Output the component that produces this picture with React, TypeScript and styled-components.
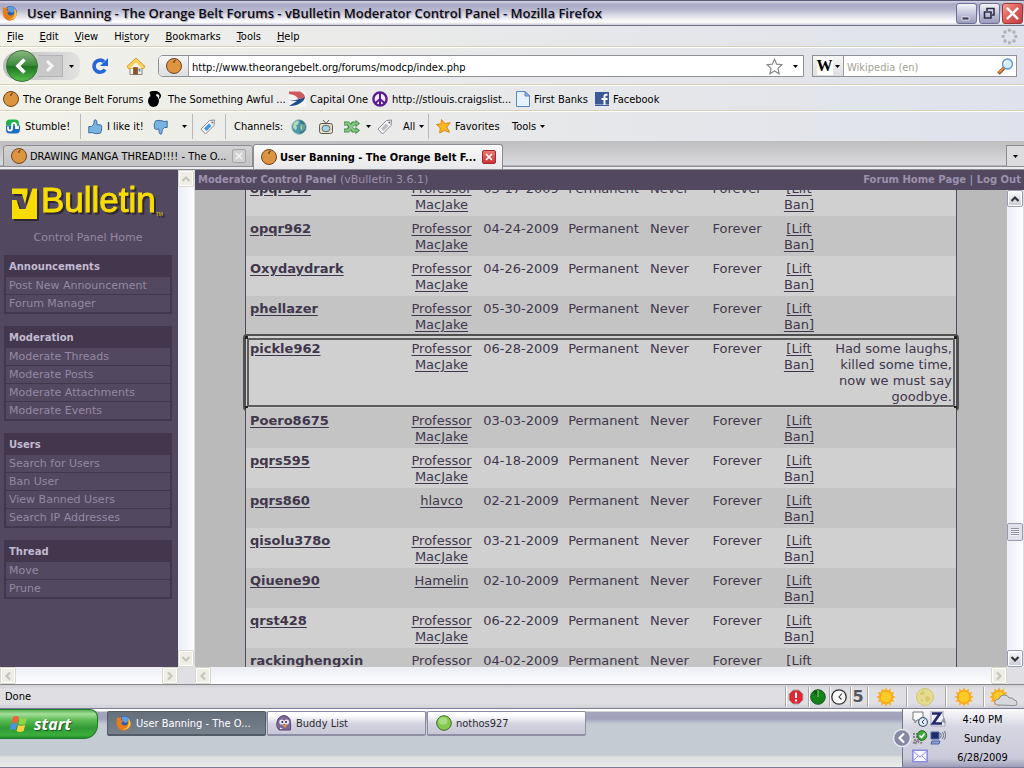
import React from "react";
import styled, { createGlobalStyle, css } from "styled-components";

const ui = '"DejaVu Sans Condensed", "DejaVu Sans", Tahoma, sans-serif';
const verdana = 'Verdana, "DejaVu Sans", sans-serif';
const toolbarBg = "linear-gradient(90deg, #f2f2ea 0%, #ecece9 25%, #e6e7ea 60%, #dfe2ec 100%)";

const GlobalStyle = createGlobalStyle`
  * { box-sizing: border-box; }
  body { margin: 0; overflow: hidden; background: #dfe2ec; font-family: ${ui}; font-size: 11px; color: #000; }
  button, input { font: inherit; color: inherit; margin: 0; padding: 0; border: 0; background: none; outline: 0; }
  button { white-space: nowrap; }
  a { color: inherit; text-decoration: none; }
  svg { display: block; flex: none; }
`;

const Screen = styled.div`
  display: flex;
  flex-direction: column;
  height: 100vh;
`;

/* ---------- title bar ---------- */
const TitleBar = styled.header`
  display: flex;
  align-items: center;
  flex: none;
  height: 26px;
  padding: 0 1px 0 2px;
  gap: 9px;
  border-top: 1px solid #5b5a78;
  border-bottom: 1px solid #73738c;
  background: linear-gradient(#d8d8e6 0%, #a9a9c6 14%, #b5b5cd 35%, #dcdce8 60%, #ffffff 88%, #c9c9d6 100%);
`;
const Title = styled.h1`
  flex: 1;
  margin: 0;
  font: 600 13px/24px "Open Sans", sans-serif;
  color: #0c0c14;
  text-shadow: 1px 1px 1px #9c9cb4;
  white-space: nowrap;
`;
const WindowButtons = styled.div`
  display: flex;
  gap: 2px;
`;
const WindowButton = styled.button<{ $close?: boolean }>`
  display: flex;
  align-items: center;
  justify-content: center;
  width: 21px;
  height: 21px;
  border: 1px solid ${(p) => (p.$close ? "#a03438" : "#6d6f98")};
  border-radius: 3px;
  background: ${(p) =>
    p.$close
      ? "linear-gradient(135deg, #f0a090, #dc5a58 50%, #c04048)"
      : "linear-gradient(#f4f4fa, #c4c4dc 50%, #9a9abc)"};
`;

/* ---------- toolbars ---------- */
const Bar = styled.div<{ $h: number; $pad?: string; $last?: boolean }>`
  display: flex;
  align-items: center;
  flex: none;
  height: ${(p) => p.$h}px;
  padding: ${(p) => p.$pad || "0"};
  background: ${toolbarBg};
  ${(p) =>
    !p.$last &&
    css`
      border-bottom: 1px solid #fff;
      box-shadow: inset 0 -1px 0 #d6d0b4;
    `}
`;
const MenuItem = styled.button`
  margin-right: 16px;
  line-height: 20px;
`;
const Spacer = styled.div`
  flex: 1;
`;
const ToolItem = styled.button<{ $w?: number; $gap?: number; $indent?: boolean }>`
  display: flex;
  align-items: center;
  gap: ${(p) => p.$gap ?? 4}px;
  flex: none;
  width: ${(p) => (p.$w ? p.$w + "px" : "auto")};
  height: 24px;
  padding-left: ${(p) => (p.$indent ? "7px" : "0")};
  text-align: left;
`;
const Bookmark = styled.a<{ $w: number }>`
  display: flex;
  align-items: center;
  gap: 4px;
  flex: none;
  width: ${(p) => p.$w}px;
  height: 24px;
  white-space: nowrap;
`;
const Separator = styled.span`
  flex: none;
  width: 1px;
  height: 25px;
  background: #b6b7bf;
`;
const Label = styled.span`
  flex: none;
  width: 65px;
  padding-left: 8px;
`;

const HistoryPill = styled.div`
  display: flex;
  align-items: center;
  flex: none;
  width: 77px;
  height: 28px;
  margin-right: 11px;
  padding-left: 3px;
  border-radius: 14px 10px 10px 14px;
  background: linear-gradient(90deg, #bdbdbd, #d6d6d6 70%, #e2e2e0);
`;
const BackButton = styled.button`
  flex: none;
`;
const ForwardButton = styled.button`
  display: flex;
  align-items: center;
  justify-content: center;
  width: 25px;
  height: 22px;
  border: 1px solid #b4b4b4;
  border-left: 0;
  background: #c8c8c8;
`;
const HistoryMenu = styled.button`
  display: flex;
  padding-left: 6px;
`;
const Field = styled.div<{ $w?: number }>`
  display: flex;
  align-items: center;
  flex: ${(p) => (p.$w ? "none" : 1)};
  width: ${(p) => (p.$w ? p.$w + "px" : "auto")};
  height: 22px;
  margin-right: ${(p) => (p.$w ? "0" : "8px")};
  border: 1px solid #8e9096;
  border-radius: ${(p) => (p.$w ? "0" : "5px 0 0 5px")};
  background: #fff;
  overflow: hidden;
`;
const FieldIcon = styled.button<{ $w: number }>`
  display: flex;
  align-items: center;
  justify-content: center;
  gap: 2px;
  flex: none;
  width: ${(p) => p.$w}px;
  height: 20px;
  border-right: 1px solid #9a9ca2;
  background: linear-gradient(#f6f6f6, #dedee0);
`;
const TextInput = styled.input`
  flex: 1;
  min-width: 0;
  height: 20px;
  padding: 2px 0 0 3px;
  &::placeholder { color: #a4a294; opacity: 1; }
`;
const Wiki = styled.b`
  font: bold 16px/18px "Liberation Serif", serif;
  background: #fff;
`;

/* ---------- tabs ---------- */
const TabStrip = styled.div`
  display: flex;
  align-items: flex-end;
  flex: none;
  height: 29px;
  padding-left: 3px;
  border-bottom: 1px solid #8c8d92;
  background: linear-gradient(#bebec0, #dadade 24px, #8c8d92 25px, #8c8d92 26px, #ececee 26px);
`;
const Tab = styled.div<{ $active?: boolean }>`
  display: flex;
  align-items: center;
  flex: none;
  width: 250px;
  height: ${(p) => (p.$active ? "25px" : "22px")};
  margin-bottom: ${(p) => (p.$active ? "0" : "2px")};
  padding: 0 6px 0 7px;
  gap: 3px;
  border: 1px solid #8c8d92;
  border-bottom: ${(p) => (p.$active ? "0" : "1px solid #8c8d92")};
  border-radius: 3px 3px 0 0;
  font-weight: ${(p) => (p.$active ? "bold" : "normal")};
  background: ${(p) => (p.$active ? "linear-gradient(#fafafa, #e8e8ea)" : "linear-gradient(#d2d2d2, #c2c2c4)")};
`;
const TabTitle = styled.button`
  flex: 1;
  min-width: 0;
  text-align: left;
`;
const TabClose = styled.button<{ $active?: boolean }>`
  display: flex;
  align-items: center;
  justify-content: center;
  flex: none;
  width: 14px;
  height: 14px;
  border: 1px solid ${(p) => (p.$active ? "#a82830" : "#a4a4a6")};
  border-radius: 2px;
  background: ${(p) => (p.$active ? "linear-gradient(#e87870, #cc3038)" : "#d0d0d0")};
`;
const AllTabs = styled.button`
  display: flex;
  align-items: center;
  justify-content: center;
  width: 18px;
  height: 22px;
  margin-bottom: 2px;
  border: 1px solid #8c8d92;
  border-right: 0;
  background: #dcdcde;
`;

/* ---------- frames ---------- */
const Frames = styled.main`
  display: flex;
  flex: 1;
  min-height: 0;
  border-bottom: 1px solid #85868c;
  font-family: ${verdana};
`;
const Frame = styled.section<{ $w?: number }>`
  display: flex;
  flex-direction: column;
  flex: ${(p) => (p.$w ? "none" : 1)};
  width: ${(p) => (p.$w ? p.$w + "px" : "auto")};
  min-width: 0;
`;
const FrameBody = styled.div`
  display: flex;
  flex: 1;
  min-height: 0;
`;
const Sidebar = styled.nav`
  flex: 1;
  min-width: 0;
  padding: 5px 6px 0 4px;
  overflow: hidden;
  background: #52485f;
  color: #9488a4;
  font-size: 11px;
`;
const Logo = styled.div`
  display: flex;
  align-items: flex-end;
  height: 46px;
  padding-left: 7px;
  color: #f7dc00;
  filter: drop-shadow(2px 2px 0 #2e2738);
`;
const LogoText = styled.span`
  margin-left: 2px;
  font: 35px/42px "Liberation Sans", sans-serif;
  -webkit-text-stroke: 1px #f7dc00;
`;
const Trade = styled.span`
  font: bold 5px/14px "Liberation Sans", sans-serif;
  color: #b8a420;
`;
const HomeLink = styled.a`
  display: block;
  margin: 9px 0 10px;
  text-align: center;
  line-height: 15px;
`;
const Group = styled.section`
  margin-bottom: 12px;
  padding: 0 2px 1px;
  background: #42374d;
`;
const GroupTitle = styled.h2`
  margin: 0;
  padding: 1px 0 0 3px;
  font: bold 10px/21px ${verdana};
  color: #c2bad0;
`;
const GroupLink = styled.a`
  display: block;
  height: 18px;
  padding-left: 3px;
  border-bottom: 1px solid #42374d;
  background: #52485f;
  line-height: 17px;
`;
const PanelHead = styled.div`
  display: flex;
  justify-content: space-between;
  flex: none;
  height: 20px;
  padding: 0 3px;
  background: #52485f;
  color: #9d92ad;
  font-size: 11px;
  line-height: 20px;
  b { font-size: 10px; }
`;
const Viewport = styled.div`
  flex: 1;
  min-width: 0;
  overflow: hidden;
  padding: 0 50px;
  background: #bababa;
`;
const BanTable = styled.table`
  width: 100%;
  margin-top: -14px;
  border: solid #52485f;
  border-width: 0 1px;
  border-spacing: 0;
  table-layout: fixed;
  font-size: 13px;
  line-height: 16px;
  color: #40374d;
  a { text-decoration: underline; text-underline-offset: 2px; }
`;
const Col = styled.col<{ $w: string }>`
  width: ${(p) => p.$w};
`;
const Row = styled.tr<{ $dark: boolean }>`
  position: relative;
  background: ${(p) => (p.$dark ? "#c4c4c4" : "#d0d0d0")};
`;
const Cell = styled.td<{ $align?: string }>`
  padding: 5px 4px 3px;
  vertical-align: top;
  text-align: ${(p) => p.$align || "center"};
`;
const Marker = styled.div`
  position: absolute;
  inset: -2px -3px -3px -3px;
  border: 2px solid #505050;
  border-radius: 4px;
  pointer-events: none;
  &::before {
    content: "";
    position: absolute;
    inset: 2px;
    border: 2px solid #5c5c5c;
    border-radius: 2px;
  }
  &::after {
    content: "";
    position: absolute;
    inset: 0;
    background:
      linear-gradient(#222 0 0) 0 0 / 3px 3px,
      linear-gradient(#222 0 0) 100% 0 / 3px 3px,
      linear-gradient(#222 0 0) 0 100% / 3px 3px,
      linear-gradient(#222 0 0) 100% 100% / 3px 3px;
    background-repeat: no-repeat;
  }
`;

/* ---------- scroll bars ---------- */
const Track = styled.div<{ $horizontal?: boolean }>`
  display: flex;
  justify-content: space-between;
  flex: none;
  flex-direction: ${(p) => (p.$horizontal ? "row" : "column")};
  ${(p) =>
    p.$horizontal
      ? "height: 17px; background: linear-gradient(#eceef4, #fdfdff);"
      : "width: 17px; background: linear-gradient(90deg, #eceef6, #fdfdff); border-right: 1px solid #dcdce4;"}
`;
const ScrollButton = styled.button<{ $on?: boolean }>`
  display: flex;
  align-items: center;
  justify-content: center;
  flex: none;
  width: 16px;
  height: 17px;
  border: 1px solid ${(p) => (p.$on ? "#9a9cb4" : "#d8d8c8")};
  border-radius: 2px;
  background: ${(p) => (p.$on ? "linear-gradient(#fbfbfd, #c8cad8)" : "#eeeee6")};
  box-shadow: inset 0 0 0 1px #fff;
`;
const Corner = styled.div`
  flex: none;
  width: 17px;
  background: #e0dfe3;
`;
const ScrollRow = styled.div`
  display: flex;
  flex: none;
  > :first-child { flex: 1; }
`;
const ThumbSpace = styled.div`
  display: flex;
  flex-direction: column;
  flex: 1;
  &::before { content: ""; flex: 316; }
  &::after { content: ""; flex: 109; }
`;
const ScrollThumb = styled.button`
  width: 16px;
  height: 18px;
  flex: none;
  border: 1px solid #9a9cb4;
  border-radius: 2px;
  background: repeating-linear-gradient(#8c8ea4 0 1px, #f4f4f8 1px 2px) center / 8px 8px no-repeat, #e0e1ea;
`;

/* ---------- status bar ---------- */
const Status = styled.footer`
  display: flex;
  align-items: center;
  flex: none;
  height: 23px;
  padding-left: 5px;
  background: linear-gradient(#d0d0d4, #dfdfe4 4px, #dfdfe4 18px, #cfcfd6);
`;
const StatusCell = styled.div<{ $w: number }>`
  display: flex;
  align-items: center;
  justify-content: center;
  flex: none;
  width: ${(p) => p.$w}px;
  height: 20px;
  padding-right: 2px;
  border-left: 1px solid #a9a8a4;
  box-shadow: inset 1px 0 0 #fff;
`;
const PageRank = styled.b`
  font: bold 16px/20px "DejaVu Sans", sans-serif;
  color: #55565c;
`;

/* ---------- task bar ---------- */
const TaskBar = styled.footer`
  display: flex;
  flex: none;
  height: 60px;
  border-top: 1px solid #7c7c98;
  border-bottom: 1px solid #7c7c98;
  background: linear-gradient(#fff 0 2px, #a4a4bc 3px, #a2a2bc 10px, #c5cbd3 15px, #c5cbd3 46px, #dcdfe0 48px, #eaebea 58px);
`;
const Start = styled.button`
  display: flex;
  align-items: center;
  gap: 6px;
  flex: none;
  width: 98px;
  height: 30px;
  margin-right: 9px;
  padding-left: 10px;
  border-radius: 0 8px 14px 0;
  border: solid #1d7a24;
  border-width: 1px 1px 1px 0;
  background: linear-gradient(#5fae58, #a4e09a 4px, #5cbc54 10px, #309a34 18px, #3cae3c 25px, #248a2c);
  color: #fff;
  font: italic bold 16px/26px "Open Sans", sans-serif;
  text-shadow: 1px 1px 1px #1c5420;
`;
const Task = styled.button<{ $active?: boolean }>`
  display: flex;
  align-items: center;
  gap: 4px;
  flex: none;
  width: 159px;
  height: 25px;
  margin: 2px 1px 0 0;
  padding-left: 8px;
  text-align: left;
  border: 1px solid ${(p) => (p.$active ? "#525c68" : "#8e8ea4")};
  border-bottom-width: 2px;
  border-radius: 2px;
  color: ${(p) => (p.$active ? "#fff" : "#2c2c30")};
  background: ${(p) =>
    p.$active ? "linear-gradient(#666f7c, #76818c)" : "linear-gradient(#ffffff 15%, #d2d2e0 55%, #c8c8d8)"};
`;
const Tray = styled.div`
  position: relative;
  display: flex;
  align-items: center;
  flex: none;
  width: 122px;
  padding: 0 5px 0 9px;
  border-left: 1px solid #73738c;
  background: linear-gradient(#fbfbfd, #d6d6e2 18px, #c9c9d9 50px, #9c9cb8);
`;
const TrayIcons = styled.div`
  display: grid;
  grid-template-columns: 16px 16px;
  grid-auto-rows: 16px;
  gap: 3px 2px;
`;
const Clock = styled.time`
  flex: 1;
  text-align: center;
  line-height: 19px;
`;
const TrayToggle = styled.button`
  position: absolute;
  left: -11px;
  top: 19px;
`;

/* ---------- icons ---------- */
const Arrow = () => (
  <svg width="5" height="3" viewBox="0 0 5 3"><path d="M0 0h5L2.500 3z" fill="#000" /></svg>
);
const Orange = () => (
  <svg width="16" height="16" viewBox="0 0 16 16">
    <circle cx="8" cy="8" r="7.500" fill="#dd9440" stroke="#6c4520" />
    <path d="M8 4.500V3l2-1M7 4h2" fill="none" stroke="#6c4520" />
  </svg>
);
const Firefox = () => (
  <svg width="16" height="16" viewBox="0 0 16 16">
    <circle cx="8.500" cy="7.500" r="6.500" fill="#2a5caa" />
    <path d="M6 2c3-1.500 7 0 8 3l-4 3-4-2z" fill="#5f9cdc" />
    <path d="M1 1.500c.5 1 1 1.500 2 1.500 1.200-.6 2.500-.4 3 0L4.800 5 7 6.400 5.500 7.600c0 2.800 3 3.600 5 2.500 1.600-1 2-3 1.200-6 3 2 3.600 5 2 8C12 15.500 8 16.400 5 15 1 13 .3 9 .7 6 .9 4 .8 3 1 1.500z" fill="#e67c1c" />
    <path d="M12.500 4c2.500 2 3 5.500 1 8-2 2.300-5 3-7 2 4 .2 7-2.500 6-10z" fill="#f8c83c" />
  </svg>
);
const Back = () => (
  <svg width="32" height="32" viewBox="0 0 32 32">
    <defs>
      <linearGradient id="bk" x1="0" y1="0" x2="0" y2="1">
        <stop offset="0" stopColor="#8cb884" /><stop offset=".48" stopColor="#3b8a3a" />
        <stop offset=".52" stopColor="#1d7420" /><stop offset="1" stopColor="#58c04c" />
      </linearGradient>
    </defs>
    <circle cx="16" cy="16" r="15.500" fill="url(#bk)" stroke="#3c7440" />
    <path d="M18.500 9.500L12 16l6.500 6.500" fill="none" stroke="#fff" strokeWidth="3.600" />
  </svg>
);
const Forward = () => (
  <svg width="12" height="12" viewBox="0 0 12 12"><path d="M3 1l5 5-5 5" fill="none" stroke="#f6f6f6" strokeWidth="3" /></svg>
);
const Reload = () => (
  <svg width="18" height="18" viewBox="0 0 18 18">
    <path d="M14 12.500A6 6 0 1 1 13 4.700" fill="none" stroke="#2468d8" strokeWidth="3.600" />
    <path d="M17 1v8H9z" fill="#2468d8" />
  </svg>
);
const Home = () => (
  <svg width="20" height="18" viewBox="0 0 20 18">
    <path d="M4 9h12v8.500H4z" fill="#f6f2e8" stroke="#8c8478" />
    <path d="M10 1L1 9.500 2.500 11.500h15L19 9.500z" fill="#fbd05c" stroke="#d49a28" />
    <path d="M10 5.500l-6 6h12z" fill="#f6f2e8" />
    <path d="M7.500 10.500h4v6.500h-4z" fill="#8c5428" stroke="#6c4020" strokeWidth=".6" />
    <path d="M12.500 12h2v2.500h-2z" fill="#5c8cc4" />
  </svg>
);
const StarOutline = () => (
  <svg width="17" height="17" viewBox="0 0 17 17">
    <path d="M8.500 1.300l2.200 4.900 5.200.6-3.900 3.600 1.100 5.300-4.600-2.700-4.600 2.700 1.100-5.300L1.100 6.800l5.200-.6z" fill="#fff" stroke="#8a8a8a" strokeWidth="1.200" />
  </svg>
);
const Search = () => (
  <svg width="17" height="17" viewBox="0 0 17 17">
    <path d="M7 10l-5.500 5.500" stroke="#7a5030" strokeWidth="3.500" />
    <path d="M6.500 10L2 14.500" stroke="#ee9040" strokeWidth="2" />
    <circle cx="10.500" cy="6" r="5" fill="#d4ecfc" stroke="#5b92d4" strokeWidth="1.300" />
    <path d="M7.500 6a3 3 0 0 1 3-3" fill="none" stroke="#fff" strokeWidth="1.500" />
  </svg>
);
const Throbber = () => (
  <svg width="17" height="17" viewBox="0 0 17 17" fill="#b4b4b8">
    {[0, 45, 90, 135, 180, 225, 270, 315].map((a) => (
      <circle key={a} cx="8.500" cy="2.200" r="1.800" transform={`rotate(${a} 8.500 8.500)`} />
    ))}
  </svg>
);
const Grenade = () => (
  <svg width="17" height="16" viewBox="0 0 17 16">
    <ellipse cx="6.500" cy="10" rx="5.500" ry="6" fill="#000" />
    <path d="M2.500 1L5 0h5q3 1 4 4 .5 2-1.500 4l-.8-.8q1.300-2 .3-3.200Q11 3 9.500 3L9 5H3.500z" fill="#000" />
  </svg>
);
const CapitalOne = () => (
  <svg width="17" height="16" viewBox="0 0 17 16">
    <path d="M0 0h17v16H0z" fill="#f4f4f6" />
    <path d="M0 .5h11c4 2 5 4 5 6.500L9 8Q8 4 0 3z" fill="#cc5a5e" />
    <path d="M0 9.500Q9 9 16 6.500c-1 4.500-8 9-16 8.500l8-5z" fill="#1c4c88" />
  </svg>
);
const Peace = () => (
  <svg width="16" height="16" viewBox="0 0 16 16">
    <circle cx="8" cy="8" r="6.600" fill="#f4eef8" stroke="#5b1c94" strokeWidth="2.400" />
    <path d="M8 2v12M8 8l-4.500 4M8 8l4.500 4" stroke="#5b1c94" strokeWidth="2" fill="none" />
  </svg>
);
const PageIcon = () => (
  <svg width="14" height="16" viewBox="0 0 14 16">
    <path d="M.5.500h8.500L13.500 5v10.500H.5z" fill="#e6f2ff" stroke="#5a84c4" />
    <path d="M9 .5V5h4.500z" fill="#8cb4e8" stroke="#5a84c4" />
  </svg>
);
const Facebook = () => (
  <svg width="14" height="14" viewBox="0 0 14 14">
    <path d="M0 0h14v14H0z" fill="#3b5998" /><path d="M0 12h14v1H0z" fill="#8c9fc8" />
    <path d="M12.500 2.800H11Q9.500 2.800 9.500 4.500V13M6.500 7H12.500" fill="none" stroke="#fff" strokeWidth="2" />
  </svg>
);
const Stumble = () => (
  <svg width="16" height="16" viewBox="0 0 16 16">
    <path d="M1 4q0-3.500 4-3.500h5q4 0 4 4v2H1z" fill="#22b04c" />
    <path d="M1 6.500h14V10q0 4.500-4 4.500H5Q1 14.500 1 11z" fill="#1c6cc0" />
    <path d="M3 7.500v2q0 2 2 2t2-2V6q0-2 2-2t2 2v3h2V7" fill="none" stroke="#fff" strokeWidth="1.800" />
  </svg>
);
const Thumb = ({ down }: { down?: boolean }) => (
  <svg width="15" height="16" viewBox="0 0 15 16">
    <path
      d="M.8 7.500h2.700Q6 6 6 3.500 5.800.800 7 .8q2.300 0 2 5h3.500q1.500.4 1 2 .8 1.200 0 2.200.6 1.200-.4 2.200.2 1.800-1.400 2.200-4 .8-7-.6L3 13.500.8 14z"
      transform={down ? "translate(15 16) rotate(180)" : undefined}
      fill="#7ab2e0"
      stroke="#3a6ea4"
    />
  </svg>
);
const Tag = ({ gray }: { gray?: boolean }) => (
  <svg width="16" height="16" viewBox="0 0 16 16">
    <path d="M1 10L9.500 1.500 14.500 1l-.5 5.500L5.500 15z" fill="#f6f6f8" stroke="#8c8c90" />
    <path d="M4 9.500L9 4.500l2.500 2.500-5 5z" fill={gray ? "#bcbec4" : "#3c94ec"} />
    <circle cx="12.300" cy="3.500" r="1" fill="#6c6c70" />
  </svg>
);
const Globe = () => (
  <svg width="16" height="16" viewBox="0 0 16 16">
    <circle cx="8" cy="8" r="7.200" fill="#4896a8" stroke="#8cb4bc" />
    <path d="M3 3.500q3-2.500 5-1l-1 3-2 1 1 2-1 3-3-3zM10 5l4 .5v4L11 13 9.500 9z" fill="#b4dcb4" />
    <path d="M8 1a7 7 0 0 1 0 14q6-6 0-14z" fill="#245c6c" opacity=".5" />
  </svg>
);
const Tv = () => (
  <svg width="16" height="16" viewBox="0 0 16 16">
    <path d="M5 1l3 3.500L11 1" fill="none" stroke="#5c5c54" />
    <rect x="1.500" y="4.500" width="13" height="10" rx="2" fill="#e4dcc4" stroke="#5c5c54" />
    <ellipse cx="8" cy="9.500" rx="4" ry="3.200" fill="#a8d4e0" stroke="#5c7078" />
  </svg>
);
const Shuffle = () => (
  <svg width="16" height="16" viewBox="0 0 16 16">
    <path d="M0 4.500h4l5 7h4M0 11.500h4l5-7h4" fill="none" stroke="#4c8c50" strokeWidth="4" />
    <path d="M11.500.8v7.400L16 4.500zM11.500 7.800v7.400l4.500-3.700z" fill="#4c8c50" />
    <path d="M.5 4.500h4l5 7h4.500M.5 11.500h4l5-7h4.500" fill="none" stroke="#86cc84" strokeWidth="2.200" />
  </svg>
);
const Star = () => (
  <svg width="15" height="15" viewBox="0 0 15 15">
    <path d="M5.500.5l3.200 4 5.500-.7-3.400 4.200 2.700 5.300-5.200-1.800L3.800 14l.4-5.200L.5 5.500l4.500-.7z" fill="#fcb820" stroke="#d8861c" />
  </svg>
);
const Cross = ({ c, s = 8 }: { c: string; s?: number }) => (
  <svg width={s} height={s} viewBox="0 0 8 8"><path d="M1 1l6 6M7 1L1 7" stroke={c} strokeWidth={s > 8 ? 1.3 : 1.7} /></svg>
);
const turns: Record<string, number> = { up: 0, right: 90, down: 180, left: 270 };
const Chevron = ({ dir, on }: { dir: string; on?: boolean }) => (
  <svg width="10" height="10" viewBox="0 0 10 10">
    <path d="M1.500 7L5 3.500 8.500 7" transform={`rotate(${turns[dir]} 5 5)`} fill="none" stroke={on ? "#34343c" : "#c6c6ba"} strokeWidth="2.200" />
  </svg>
);
const LogoV = () => (
  <svg width="28" height="36" viewBox="0 0 28 36">
    <path d="M1 3.500h15.500v5L14 19l-3-10H1zM1 15h4.500l3 9h6L21.500 3.500H26V34H1z" fill="#f7dc00" />
  </svg>
);
const Windows = () => (
  <svg width="18" height="18" viewBox="0 0 18 18">
    <path d="M3 2q3-2 6 0L7.500 8Q4.500 6.500 1.500 8z" fill="#f0603c" />
    <path d="M10 2.500q3 2 7 0L15.500 9q-4 1.500-7 0z" fill="#8cd448" />
    <path d="M1.200 9q3-1.500 6 0L5.500 15q-3-1.500-5.500 0z" fill="#4c90f0" />
    <path d="M8.200 10q3 1.500 7 0l-1.600 6q-4 1.800-7 0z" fill="#fcd03c" />
  </svg>
);
const Penguin = () => (
  <svg width="16" height="16" viewBox="0 0 16 16">
    <path d="M1 12Q0 8 2 4 4 .5 8 .5t6 4q1 4 .5 10.500H3z" fill="#7c6898" stroke="#5c4878" />
    <circle cx="5.800" cy="7" r="2.600" fill="#e8e4f0" /><circle cx="10.500" cy="7" r="2.600" fill="#e8e4f0" />
    <circle cx="6.300" cy="7" r="1" fill="#302040" /><circle cx="10" cy="7" r="1" fill="#302040" />
    <path d="M6 10l5-.5L9.500 13z" fill="#f08c3c" /><path d="M4 12.500l3 1.500H4z" fill="#f4f0f8" />
  </svg>
);
const GreenBall = () => (
  <svg width="16" height="16" viewBox="0 0 16 16">
    <circle cx="8" cy="8" r="7.300" fill="#84c850" stroke="#3c6c24" />
    <ellipse cx="7" cy="6" rx="4.500" ry="3.800" fill="#a8dc80" />
  </svg>
);
const Alert = () => (
  <svg width="16" height="16" viewBox="0 0 16 16">
    <path d="M5 1h6l4 4v6l-4 4H5l-4-4V5z" fill="#e02830" stroke="#a8aab0" /><path d="M8 3.500v5.500M8 10.500v2" stroke="#fff" strokeWidth="2" />
  </svg>
);
const Radar = () => (
  <svg width="16" height="16" viewBox="0 0 16 16">
    <circle cx="8" cy="8" r="7.300" fill="#148418" stroke="#1c5420" /><path d="M8 8V1a7 7 0 0 0-5 2z" fill="#0c5c10" /><path d="M8 8V1" stroke="#7ce06c" />
  </svg>
);
const ClockIcon = () => (
  <svg width="16" height="16" viewBox="0 0 16 16">
    <circle cx="8" cy="8" r="7.200" fill="#fafafa" stroke="#2c2c2c" strokeWidth="1.300" /><path d="M11 4.500L8 8l2.500 2.500" fill="none" stroke="#3c3c3c" strokeWidth="1.100" />
  </svg>
);
const Sun = ({ cloud }: { cloud?: boolean }) => (
  <svg width={cloud ? 29 : 20} height="20" viewBox={cloud ? "0 0 29 20" : "0 0 20 20"}>
    {[0, 30, 60, 90, 120, 150, 180, 210, 240, 270, 300, 330].map((a) => (
      <path key={a} d="M7.500 5L10 .3 12.500 5z" fill="#f8b020" transform={`rotate(${a} 10 10)`} />
    ))}
    <circle cx="10" cy="10" r="6" fill="#fccc24" stroke="#f4a020" />
    {cloud && <path d="M9 18q-4-.5-3-4 1-2.500 4-2 1-4 5-4t5 3q4-1 5 2 3 0 3 3t-3 2.500z" fill="#d8d9de" stroke="#8c8e96" />}
  </svg>
);
const Moon = () => (
  <svg width="20" height="20" viewBox="0 0 20 20">
    <circle cx="10" cy="10" r="8.500" fill="#e6dc90" stroke="#d0c478" />
    <path d="M5 6q3-3 5-1l-1 3H5zM10 10q4-2 5 1t-4 4zM5 12l3 1-1 2z" fill="#d6c874" />
  </svg>
);
const ChatClock = () => (
  <svg width="16" height="16" viewBox="0 0 16 16">
    <path d="M1 1h10v8H5l-2 3V9H1z" fill="#fafafa" stroke="#74767c" /><circle cx="11" cy="11" r="4.400" fill="#e4eef8" stroke="#4c6478" strokeWidth="1.200" />
    <path d="M12.500 8.500L10 11l2 2" fill="none" stroke="#2c3c4c" />
  </svg>
);
const ZIcon = () => (
  <svg width="16" height="16" viewBox="0 0 16 16">
    <path d="M1 0h12v4l2 9v2H1z" fill="#f0f0f8" stroke="#a4a4b8" /><path d="M2 2.500h8L3 12.500h9" fill="none" stroke="#24246c" strokeWidth="2.600" />
    <path d="M11 11l3-5 2 6z" fill="#8c98a0" />
  </svg>
);
const Buddy = () => (
  <svg width="16" height="16" viewBox="0 0 16 16">
    <path d="M1 4h5M1 7h5M2 10h9M3 14q3-4 8 0M1 13l4-2" stroke="#84868c" fill="none" strokeDasharray="2 1" strokeWidth="2" />
    <circle cx="10" cy="5.500" r="4.800" fill="#3ca83c" stroke="#247024" /><path d="M7.500 5.500L9.500 7.500 12.500 3.500" stroke="#fff" strokeWidth="1.600" fill="none" />
  </svg>
);
const Network = () => (
  <svg width="16" height="16" viewBox="0 0 16 16">
    <path d="M1 2h8v7H1z" fill="#1c2c6c" stroke="#4c64a4" /><path d="M2 11h8l-1 3H1z" fill="#8ca0d0" stroke="#4c64a4" />
    <path d="M10.500 3q1.500 2.500 0 5M12.500 2q2.500 3.500 0 7M14.500 1q2.500 4 0 8.500" stroke="#6c7484" fill="none" />
  </svg>
);
const Mail = () => (
  <svg width="16" height="14" viewBox="0 0 16 14">
    <path d="M.8 1.300h14.400v11.400H.8z" fill="#f6f6ff" stroke="#8c8ce4" strokeWidth="1.600" /><path d="M1 2l7 6 7-6M1 12l5-5M15 12l-5-5" fill="none" stroke="#8c8ce4" />
  </svg>
);
const Toggle = () => (
  <svg width="20" height="20" viewBox="0 0 20 20">
    <circle cx="10" cy="10" r="8.500" fill="#8688a4" stroke="#e8e8f0" strokeWidth="1.500" /><path d="M12 5.500L7.500 10l4.500 4.500" fill="none" stroke="#fff" strokeWidth="2.200" />
  </svg>
);

/* ---------- data ---------- */
/* each menu name, with the position of its access key */
const menus: [string, number][] = [
  ["File", 0], ["Edit", 0], ["View", 0], ["History", 2], ["Bookmarks", 0], ["Tools", 0], ["Help", 0],
];
const groups: [string, string[]][] = [
  ["Announcements", ["Post New Announcement", "Forum Manager"]],
  ["Moderation", ["Moderate Threads", "Moderate Posts", "Moderate Attachments", "Moderate Events"]],
  ["Users", ["Search for Users", "Ban User", "View Banned Users", "Search IP Addresses"]],
  ["Thread", ["Move", "Prune"]],
];
const bans: [string, string, string, string?][] = [
  ["opqr947", "Professor MacJake", "03-17-2009"],
  ["opqr962", "Professor MacJake", "04-24-2009"],
  ["Oxydaydrark", "Professor MacJake", "04-26-2009"],
  ["phellazer", "Professor MacJake", "05-30-2009"],
  ["pickle962", "Professor MacJake", "06-28-2009", "Had some laughs, killed some time, now we must say goodbye."],
  ["Poero8675", "Professor MacJake", "03-03-2009"],
  ["pqrs595", "Professor MacJake", "04-18-2009"],
  ["pqrs860", "hlavco", "02-21-2009"],
  ["qisolu378o", "Professor MacJake", "03-21-2009"],
  ["Qiuene90", "Hamelin", "02-10-2009"],
  ["qrst428", "Professor MacJake", "06-22-2009"],
  ["rackinghengxin", "Professor MacJake", "04-02-2009"],
];
const columns = ["159px", "73px", "86px", "79px", "53px", "82px", "42px", "auto"];

export default function App() {
  return (
    <Screen>
      <GlobalStyle />
      <TitleBar>
        <Firefox />
        <Title>User Banning - The Orange Belt Forums - vBulletin Moderator Control Panel - Mozilla Firefox</Title>
        <WindowButtons>
          <WindowButton aria-label="Minimize">
            <svg width="15" height="15" viewBox="0 0 15 15"><path d="M3 11h7v3H3z" fill="#3c3c5c" stroke="#fff" strokeWidth=".7" /></svg>
          </WindowButton>
          <WindowButton aria-label="Restore">
            <svg width="13" height="13" viewBox="0 0 13 13"><path d="M4 4V1.500h7V8H9M1.500 5h6.500v6H1.500z" fill="none" stroke="#2c2c48" strokeWidth="1.600" /></svg>
          </WindowButton>
          <WindowButton $close aria-label="Close"><Cross c="#fff" s={15} /></WindowButton>
        </WindowButtons>
      </TitleBar>

      <Bar as="nav" $h={22} $pad="0 6px 0 7px">
        {menus.map(([m, k]) => (
          <MenuItem key={m}>{m.slice(0, k)}<u>{m[k]}</u>{m.slice(k + 1)}</MenuItem>
        ))}
        <Spacer />
        <Throbber />
      </Bar>

      <Bar $h={38} $pad="0 7px 1px 3px">
        <HistoryPill>
          <BackButton aria-label="Back"><Back /></BackButton>
          <ForwardButton aria-label="Forward"><Forward /></ForwardButton>
          <HistoryMenu aria-label="Recent pages"><Arrow /></HistoryMenu>
        </HistoryPill>
        <ToolItem aria-label="Reload" $w={35}><Reload /></ToolItem>
        <ToolItem aria-label="Home" $w={32}><Home /></ToolItem>
        <Field>
          <FieldIcon $w={30} aria-label="Site identity"><Orange /></FieldIcon>
          <TextInput aria-label="Address" defaultValue="http://www.theorangebelt.org/forums/modcp/index.php" />
          <ToolItem aria-label="Bookmark this page" $w={27}><StarOutline /></ToolItem>
          <ToolItem aria-label="Address history" $w={10}><Arrow /></ToolItem>
        </Field>
        <Field $w={205}>
          <FieldIcon $w={31} aria-label="Search engine"><Wiki>W</Wiki><Arrow /></FieldIcon>
          <TextInput aria-label="Search" placeholder="Wikipedia (en)" />
          <ToolItem aria-label="Go" $w={19}><Search /></ToolItem>
        </Field>
      </Bar>

      <Bar $h={26} $pad="1px 0 0 3px">
        <Bookmark href="#" $w={144}><Orange />The Orange Belt Forums</Bookmark>
        <Bookmark href="#" $w={142}><Grenade />The Something Awful ...</Bookmark>
        <Bookmark href="#" $w={83}><CapitalOne />Capital One</Bookmark>
        <Bookmark href="#" $w={144}><Peace />http://stlouis.craigslist...</Bookmark>
        <Bookmark href="#" $w={79}><PageIcon />First Banks</Bookmark>
        <Bookmark href="#" $w={80}><Facebook />Facebook</Bookmark>
      </Bar>

      <Bar $h={29} $pad="0 0 0 5px" $last>
        <ToolItem $w={75}><Stumble />Stumble!</ToolItem>
        <Separator />
        <ToolItem $w={72} $indent><Thumb />I like it!</ToolItem>
        <ToolItem $w={39} $gap={14}><Thumb down /><Arrow /></ToolItem>
        <Separator />
        <ToolItem $w={32} $indent aria-label="Tag"><Tag /></ToolItem>
        <Separator />
        <Label>Channels:</Label>
        <ToolItem $w={27} aria-label="Web"><Globe /></ToolItem>
        <ToolItem $w={26} aria-label="Video"><Tv /></ToolItem>
        <ToolItem $w={33} $gap={6} aria-label="Shuffle"><Shuffle /><Arrow /></ToolItem>
        <ToolItem $w={26} aria-label="Tags"><Tag gray /></ToolItem>
        <ToolItem $w={25}>All<Arrow /></ToolItem>
        <Separator />
        <ToolItem $w={83} $indent><Star />Favorites</ToolItem>
        <ToolItem>Tools<Arrow /></ToolItem>
      </Bar>

      <TabStrip>
        <Tab>
          <Orange />
          <TabTitle>DRAWING MANGA THREAD!!!! - The O...</TabTitle>
          <TabClose aria-label="Close tab"><Cross c="#f4f4f4" /></TabClose>
        </Tab>
        <Tab $active>
          <Orange />
          <TabTitle>User Banning - The Orange Belt F...</TabTitle>
          <TabClose $active aria-label="Close tab"><Cross c="#fff" /></TabClose>
        </Tab>
        <Spacer />
        <AllTabs aria-label="List all tabs"><Arrow /></AllTabs>
      </TabStrip>

      <Frames>
        <Frame $w={195}>
          <FrameBody>
            <Sidebar>
              <Logo><LogoV /><LogoText>Bulletin</LogoText><Trade>TM</Trade></Logo>
              <HomeLink href="#">Control Panel Home</HomeLink>
              {groups.map(([title, links]) => (
                <Group key={title}>
                  <GroupTitle>{title}</GroupTitle>
                  {links.map((l) => <GroupLink key={l} href="#">{l}</GroupLink>)}
                </Group>
              ))}
            </Sidebar>
            <Track>
              <ScrollButton aria-label="Scroll up"><Chevron dir="up" /></ScrollButton>
              <ScrollButton aria-label="Scroll down"><Chevron dir="down" /></ScrollButton>
            </Track>
          </FrameBody>
          <ScrollRow>
            <Track $horizontal>
              <ScrollButton aria-label="Scroll left"><Chevron dir="left" /></ScrollButton>
              <ScrollButton aria-label="Scroll right"><Chevron dir="right" /></ScrollButton>
            </Track>
            <Corner />
          </ScrollRow>
        </Frame>
        <Frame>
          <PanelHead>
            <span><b>Moderator Control Panel</b> (vBulletin 3.6.1)</span>
            <b><a href="#">Forum Home Page</a> | <a href="#">Log Out</a></b>
          </PanelHead>
          <FrameBody>
            <Viewport>
              <BanTable>
                <colgroup>{columns.map((w, i) => <Col key={i} $w={w} />)}</colgroup>
                <tbody>
                  {bans.map(([name, by, date, reason], i) => (
                    <Row key={name} $dark={i % 2 === 1}>
                      <Cell $align="left"><b><a href="#">{name}</a></b></Cell>
                      <Cell><a href="#">{by}</a></Cell>
                      <Cell>{date}</Cell>
                      <Cell>Permanent</Cell>
                      <Cell>Never</Cell>
                      <Cell>Forever</Cell>
                      <Cell><a href="#">[Lift Ban]</a></Cell>
                      <Cell $align="right">{reason}{reason && <Marker />}</Cell>
                    </Row>
                  ))}
                </tbody>
              </BanTable>
            </Viewport>
            <Track>
              <ScrollButton $on aria-label="Scroll up"><Chevron dir="up" on /></ScrollButton>
              <ThumbSpace><ScrollThumb aria-label="Scroll position" /></ThumbSpace>
              <ScrollButton $on aria-label="Scroll down"><Chevron dir="down" on /></ScrollButton>
            </Track>
          </FrameBody>
          <ScrollRow>
            <Track $horizontal>
              <ScrollButton aria-label="Scroll left"><Chevron dir="left" /></ScrollButton>
              <ScrollButton aria-label="Scroll right"><Chevron dir="right" /></ScrollButton>
            </Track>
            <Corner />
          </ScrollRow>
        </Frame>
      </Frames>

      <Status>
        Done
        <Spacer />
        <StatusCell $w={23}><Alert /></StatusCell>
        <StatusCell $w={21}><Radar /></StatusCell>
        <StatusCell $w={21}><ClockIcon /></StatusCell>
        <StatusCell $w={17}><PageRank>5</PageRank></StatusCell>
        <StatusCell $w={39}><Sun /></StatusCell>
        <StatusCell $w={39}><Moon /></StatusCell>
        <StatusCell $w={38}><Sun /></StatusCell>
        <StatusCell $w={41}><Sun cloud /></StatusCell>
      </Status>

      <TaskBar>
        <Start><Windows />start</Start>
        <Task $active><Firefox />User Banning - The O...</Task>
        <Task><Penguin />Buddy List</Task>
        <Task><GreenBall />nothos927</Task>
        <Spacer />
        <Tray>
          <TrayToggle aria-label="Show hidden icons"><Toggle /></TrayToggle>
          <TrayIcons><ChatClock /><ZIcon /><Buddy /><Network /><Mail /></TrayIcons>
          <Clock>4:40 PM<br />Sunday<br />6/28/2009</Clock>
        </Tray>
      </TaskBar>
    </Screen>
  );
}
